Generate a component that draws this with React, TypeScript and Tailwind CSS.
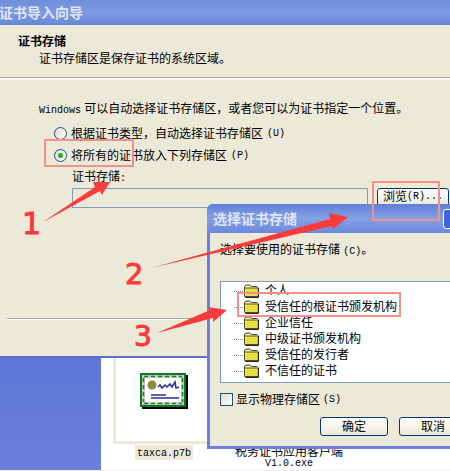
import type { ReactNode } from "react";

const STORES = ["个人", "受信任的根证书颁发机构", "企业信任", "中级证书颁发机构", "受信任的发行者", "不信任的证书"];

function Lat({ children }: { children: ReactNode }) {
  return <span className="font-['Liberation_Mono',monospace] text-[10px]">{children}</span>;
}

function Folder() {
  return (
    <svg width="15" height="14" viewBox="0 0 15 14" className="shrink-0">
      <path d="M0.5 12.5V2.5L2 1H6L7.5 2.5H13L14 3.5V12.5Z" fill="#f4f08a" stroke="#4a4a3a" />
      <rect x="1.5" y="4" width="12" height="8" fill="#e8e040" />
      <path d="M1 4H14" stroke="#55553f" />
      <path d="M14.5 4V13.5H1.5" stroke="#222" fill="none" />
    </svg>
  );
}

function Radio({ checked }: { checked?: boolean }) {
  return (
    <span className="flex h-[13px] w-[13px] shrink-0 items-center justify-center rounded-full border border-[#1c5180] bg-gradient-to-br from-[#dcdcd5] to-white">
      {checked && <span className="h-[5px] w-[5px] rounded-full bg-[#2fa52f]" />}
    </span>
  );
}

function CertIcon() {
  return (
    <svg width="48" height="36" viewBox="0 0 48 36" className="shrink-0">
      <rect x="2" y="2" width="46" height="34" fill="#000" />
      <rect x="0" y="0" width="46" height="34" fill="#0a7a1e" />
      <rect x="2" y="2" width="42" height="30" fill="#c9c9c9" />
      <rect x="5" y="5" width="36" height="24" fill="#fff" />
      <path d="M4 3.5H42M4 30.5H42M3.5 5V29M42.5 5V29" stroke="#1f7f2f" strokeWidth="1.5" strokeDasharray="4 3" />
      <circle cx="12" cy="12" r="4.5" fill="#8c8a3c" />
      <path d="M18 14l2-2 2 3 3-3 2 2 3-3 2 3 3-5 1 6 3-1" stroke="#2a2a9c" strokeWidth="1.5" fill="none" />
      <path d="M11 22H26M11 25H39" stroke="#2a2a9c" strokeWidth="1.5" />
      <path d="M20 8h1M30 7h1M38 10h1M24 19h1M32 20h1M39 19h1M9 19h1M16 28h1M28 28h1" stroke="#f0e020" />
    </svg>
  );
}

function Arrow({ points }: { points: string }) {
  return <polygon points={points} fill="#fb3a3a" />;
}

export default function App() {
  return (
    <div className="relative flex h-[471px] w-[450px] flex-col overflow-hidden bg-[#f0f0f0] font-['Liberation_Sans','Noto_Sans_CJK_SC',sans-serif] text-[12px] leading-none text-black">
      {/* wizard window */}
      <div className="flex h-[360px] flex-col border-b-2 border-[#5a6fd0] bg-[#ece9d8]">
        <div className="flex h-[25px] items-center bg-gradient-to-b from-[#6f8fdc] via-[#7c99e2] to-[#6a86d8] text-[14px] font-bold text-[#dfe6f5]">
          <span className="-ml-px">证书导入向导</span>
        </div>
        <div className="h-[55px] border-b-2 border-b-[#f7f6f0] pl-[18px] pt-[11px] shadow-[inset_0_-1px_0_#aca899]">
          <div className="font-bold">证书存储</div>
          <div className="ml-[21px] mt-[5px]">证书存储区是保存证书的系统区域。</div>
        </div>
        <div className="ml-[39px] mt-[23px]"><Lat>Windows</Lat> 可以自动选择证书存储区，或者您可以为证书指定一个位置。</div>
        <div className="ml-[54px] mt-[11px] flex items-center gap-[4px]"><Radio />根据证书类型，自动选择证书存储区 <Lat>(U)</Lat></div>
        <div className="ml-[54px] mt-[9px] flex items-center gap-[4px]"><Radio checked />将所有的证书放入下列存储区 <Lat>(P)</Lat></div>
        <div className="ml-[72px] mt-[9px]">证书存储<Lat>:</Lat></div>
        <div className="ml-[72px] mt-[4px] flex items-start gap-[9px]">
          <div className="h-[20px] w-[296px] border border-[#7f9db9]" />
          <div className="flex h-[18px] w-[72px] items-center justify-center rounded-[3px] border border-[#003c74] bg-gradient-to-b from-white to-[#ece9d8]">
            浏览 <Lat>(R)...</Lat>
          </div>
        </div>
        <div className="ml-[7px] mt-[110px] h-[2px] border-t border-[#aca899] bg-white" />
      </div>

      {/* desktop behind the wizard */}
      <div className="mb-px flex flex-1 bg-white">
        <div className="h-full w-[101px] bg-gradient-to-b from-[#5f76d6] to-[#6b7fdc]" />
        <div className="ml-[12px] flex flex-col items-start">
          <div className="flex h-[86px] w-[100px] items-start border-b-[3px] border-l-[3px] border-[#ece9d8] pl-[24px] pt-[15px]">
            <CertIcon />
          </div>
          <div className="ml-[22px] mt-px bg-[#ece9d8] px-[2px] py-px"><Lat>taxca.p7b</Lat></div>
        </div>
        <div className="ml-[22px] flex flex-col items-center pt-[88px] leading-[12px]">
          <span>税务证书应用客户端</span>
          <Lat>V1.0.exe</Lat>
        </div>
      </div>

      {/* store picker dialog */}
      <div className="absolute left-[207px] top-[204px] flex h-[245px] w-[260px] flex-col rounded-t-[6px] border-b-[3px] border-l-[3px] border-[#6d80e2] bg-[#ece9d8]">
        <div className="-ml-[3px] flex h-[29px] items-center rounded-t-[6px] bg-gradient-to-b from-[#5f7fd8] via-[#86a0e6] to-[#6d88da] pl-[6px] text-[14px] font-bold text-[#dfe6f5]">
          选择证书存储
          <span className="ml-[146px] h-[20px] w-[16px] rounded-[3px] border border-white bg-[#3f66d8]" />
        </div>
        <div className="ml-[10px] mt-[11px]">选择要使用的证书存储 <Lat>(C)</Lat>。</div>
        <div className="ml-[10px] mt-[24px] flex h-[102px] flex-col gap-[2px] border border-[#7f9db9] bg-white pl-[13px] pt-[2px]">
          {STORES.map(name => (
            <div key={name} className="flex h-[14px] items-center">
              <span className="mr-[1px] w-[9px] border-t border-dotted border-[#808080]" />
              <Folder />
              <span className="ml-[6px]">{name}</span>
            </div>
          ))}
        </div>
        <div className="ml-[10px] mt-[10px] flex items-center gap-[3px]">
          <span className="h-[13px] w-[13px] border border-[#1c5180] bg-gradient-to-br from-[#dcdcd5] to-white" />
          显示物理存储区 <Lat>(S)</Lat>
        </div>
        <div className="ml-[110px] mt-[11px] flex gap-[11px]">
          <div className="flex h-[19px] w-[73px] items-center justify-center rounded-[3px] border border-[#003c74] bg-gradient-to-b from-white to-[#ece9d8]">确定</div>
          <div className="flex h-[19px] w-[73px] items-center justify-center rounded-[3px] border border-[#003c74] bg-gradient-to-b from-white to-[#ece9d8]">取消</div>
        </div>
      </div>

      {/* annotations */}
      <div className="absolute left-[44px] top-[139px] h-[28px] w-[90px] border-2 border-[#f78f8f]" />
      <div className="absolute left-[372px] top-[181px] h-[40px] w-[68px] border-2 border-[#f78f8f]" />
      <div className="absolute left-[237px] top-[292px] h-[25px] w-[164px] border-2 border-[#f78f8f]" />
      <svg className="absolute left-0 top-0" width="450" height="471" viewBox="0 0 450 471">
        <Arrow points="43,222 95,187 93,182 110,182 102,195 100,191" />
        <Arrow points="151,268 330,219 329,213 348,217 333,229 332,226" />
        <Arrow points="157,333 210,310 208,307 227,310 213,322 213,318" />
      </svg>
      <span className="absolute left-[22px] top-[206px] font-['DejaVu_Sans',sans-serif] text-[30px] leading-[36px] text-[#fb3a3a] [-webkit-text-stroke:1px_#fb3a3a]">1</span>
      <span className="absolute left-[125px] top-[256px] font-['DejaVu_Sans',sans-serif] text-[29px] leading-[36px] text-[#fb3a3a] [-webkit-text-stroke:1px_#fb3a3a]">2</span>
      <span className="absolute left-[134px] top-[319px] font-['DejaVu_Sans',sans-serif] text-[28px] leading-[36px] text-[#fb3a3a] [-webkit-text-stroke:1px_#fb3a3a]">3</span>
    </div>
  );
}
